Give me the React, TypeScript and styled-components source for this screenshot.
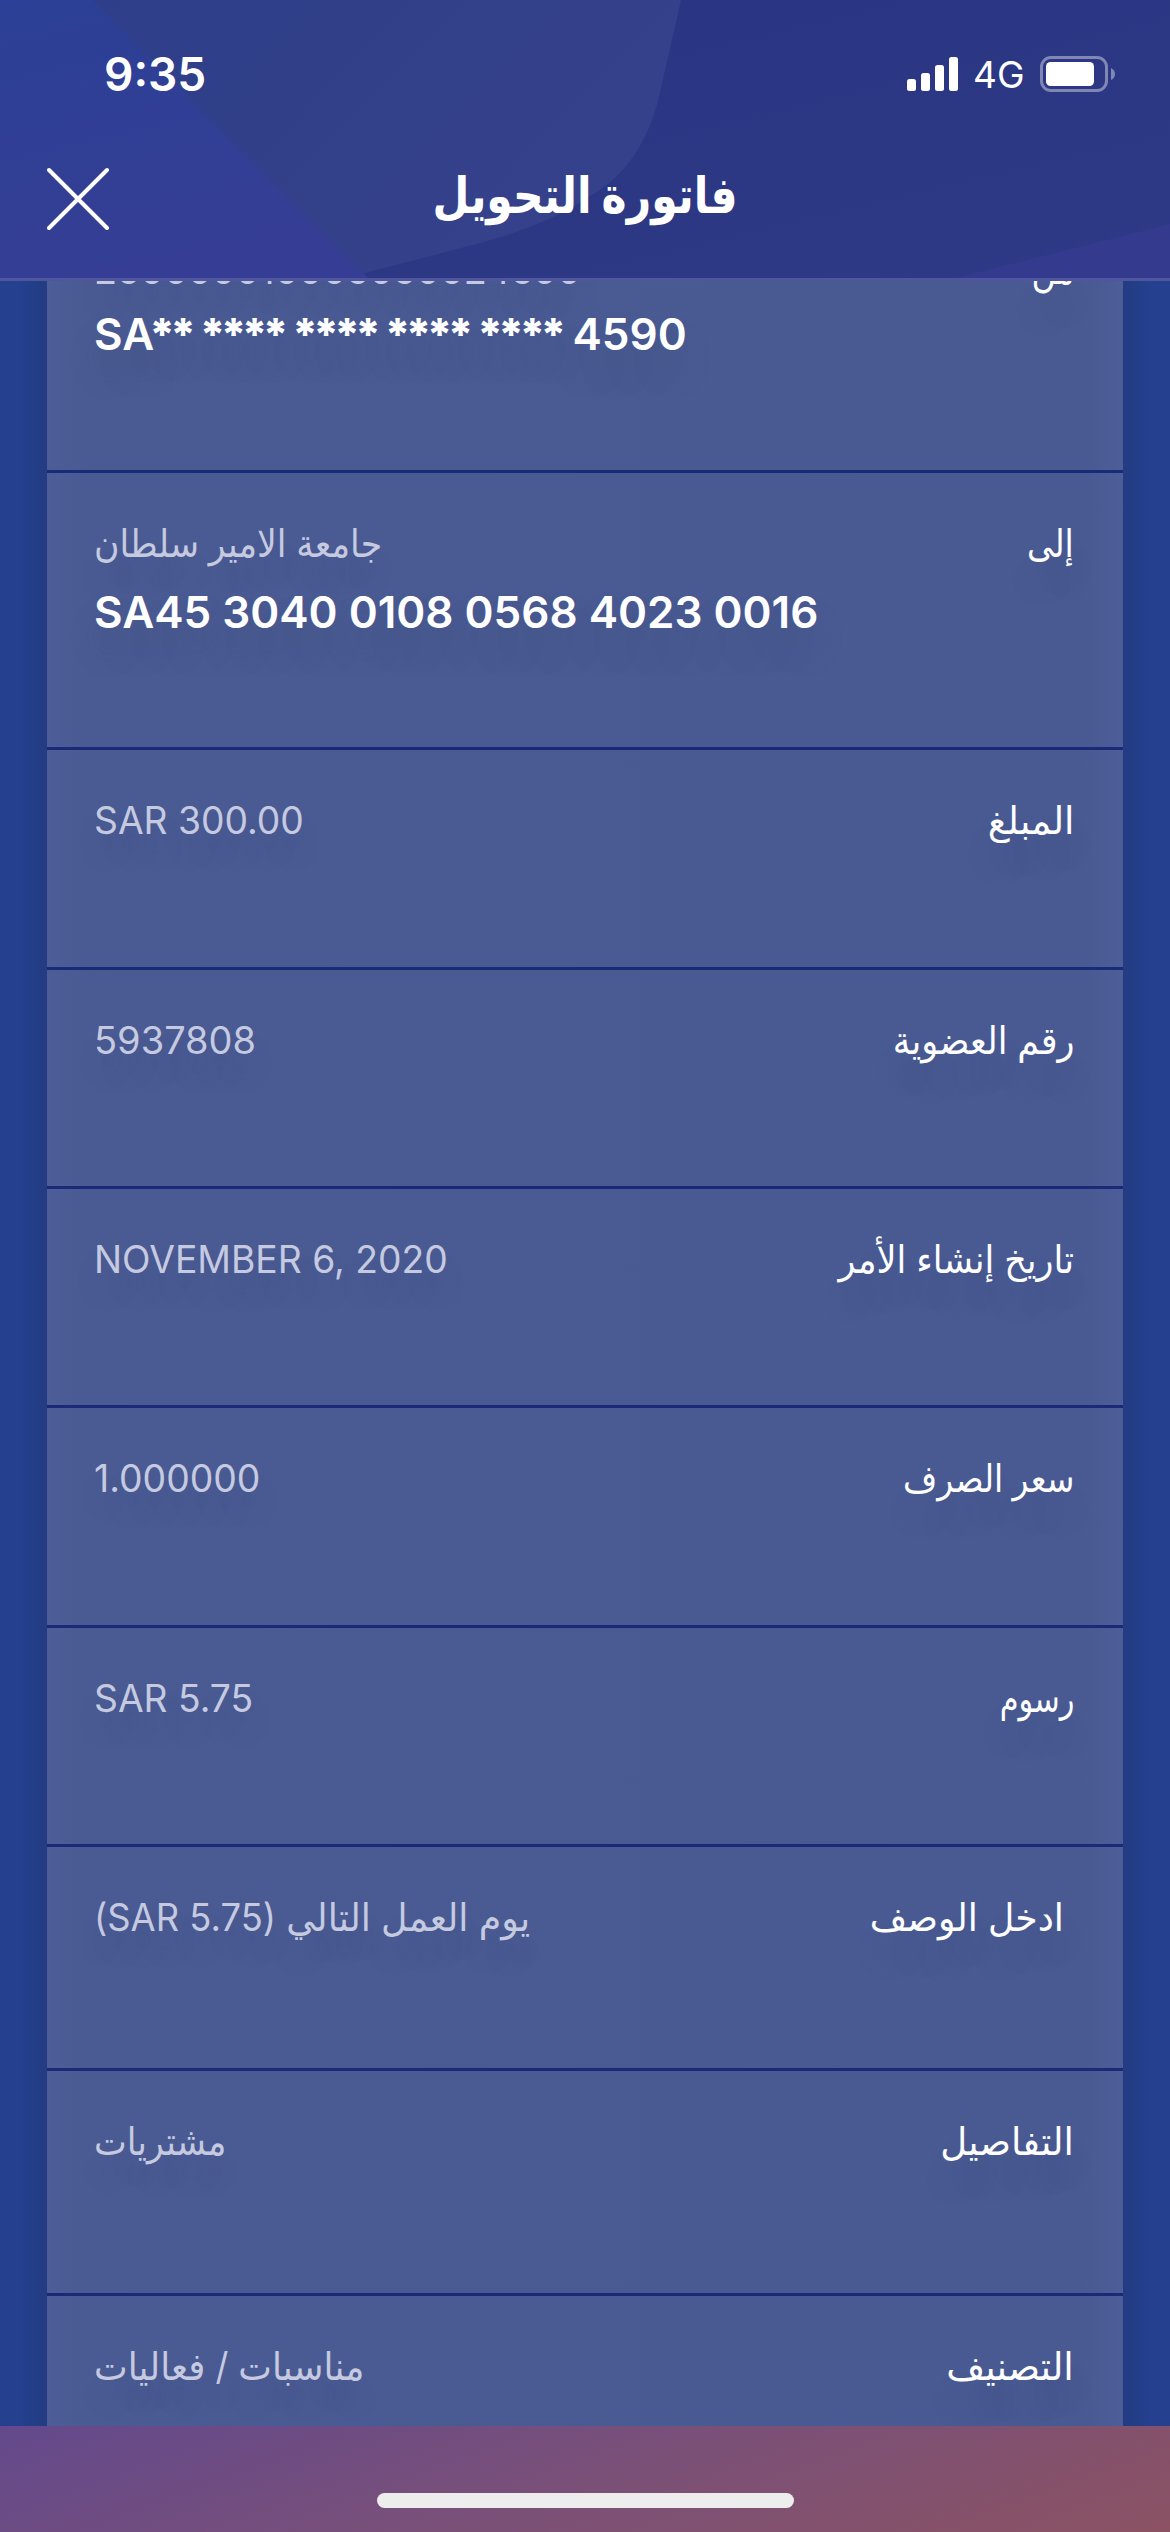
import React from "react";
import styled, { createGlobalStyle } from "styled-components";

const Global = createGlobalStyle`
  * { box-sizing: border-box; }
  html, body { margin: 0; padding: 0; background: #233f8f; }
`;

const Screen = styled.div`
  position: relative;
  width: 1170px;
  height: 2532px;
  overflow: hidden;
  display: flex;
  flex-direction: column;
  font-family: Inter, "DejaVu Sans", sans-serif;
  color: #fff;
`;

const Header = styled.header`
  position: relative;
  flex: none;
  height: 281px;
  border-bottom: 3px solid #5055a0;
  background: #2a3684;
  display: flex;
  flex-direction: column;
`;

const Backdrop = styled.svg`
  position: absolute;
  left: 0;
  top: 0;
`;

const StatusBar = styled.div`
  position: relative;
  height: 120px;
  display: flex;
  justify-content: space-between;
  align-items: flex-start;
  padding: 45px 54px 0 104px;
`;

const Time = styled.div`
  font-size: 46px;
  line-height: 58px;
  font-weight: 600;
`;

const Indicators = styled.div`
  display: flex;
  align-items: center;
  height: 58px;
`;

const Network = styled.span`
  width: 50px;
  margin: 0 17px 0 15px;
  font-size: 37px;
  line-height: 46px;
  padding-top: 2px;
  white-space: nowrap;
`;

const TitleBar = styled.div`
  position: relative;
  height: 158px;
  display: grid;
  grid-template-columns: 110px 1fr 110px;
`;

const Close = styled.button`
  padding: 0;
  margin: 47px 0 0 47px;
  width: 64px;
  height: 64px;
  border: 0;
  background: none;
`;

const Title = styled.h1`
  margin: 40px 0 0;
  text-align: center;
  font-size: 50px;
  line-height: 70px;
  font-weight: 700;
  transform: scaleX(0.85);
`;

const Scroll = styled.main`
  flex: 1;
  min-height: 0;
  overflow: hidden;
  padding: 0 47px;
  background: linear-gradient(90deg, #24408f 0, #24408f 18px, #233c82 47px, #233c82 1123px, #24408f 1152px);
`;

const Card = styled.section`
  display: flex;
  flex-direction: column;
  height: 100%;
  background: linear-gradient(90deg, #4c5d97 0, #4a5a93 40px, #495a93 1036px, #4c5d97 1076px);
`;

const Row = styled.div<{ $h: number; $up?: number }>`
  flex: none;
  height: ${(p) => p.$h}px;
  margin-top: ${(p) => -(p.$up ?? 0)}px;
  border-bottom: 3px solid #192b76;
  padding: 48px 49px 0 47px;
  display: flex;
  justify-content: space-between;
  align-items: flex-start;
`;

const Values = styled.div`
  display: flex;
  flex-direction: column;
  align-items: flex-start;
`;

const Value = styled.div<{ $sx?: number; $dy?: number }>`
  font-size: 38px;
  line-height: 44px;
  height: 44px;
  padding-top: ${(p) => p.$dy ?? 0}px;
  color: #c5cae0;
  white-space: nowrap;
  transform: scaleX(${(p) => p.$sx ?? 1});
  transform-origin: left;
  text-shadow: 0 22px 28px rgba(60, 85, 115, 0.12);
`;

const Iban = styled.div`
  margin-top: 20px;
  font-size: 44px;
  line-height: 54px;
  font-weight: 600;
  white-space: nowrap;
  text-shadow: 0 24px 28px rgba(60, 85, 115, 0.3);
`;

const Mask = styled.span`
  margin-left: -5px;
  font-weight: 800;
  letter-spacing: -4.6px;
  word-spacing: 3.4px;
`;

const Label = styled.div<{ $sx?: number; $inset?: number; $dy?: number }>`
  font-size: 38px;
  line-height: 44px;
  padding-top: ${(p) => p.$dy ?? 0}px;
  white-space: nowrap;
  margin-right: ${(p) => p.$inset ?? 0}px;
  transform: scaleX(${(p) => p.$sx ?? 1});
  transform-origin: right;
  text-shadow: 0 24px 28px rgba(60, 85, 115, 0.2);
`;

const Footer = styled.footer`
  flex: none;
  height: 106px;
  display: flex;
  justify-content: center;
  padding-top: 67px;
  background: linear-gradient(160deg, #63498c 0%, #7a5078 50%, #8b5263 100%);
`;

const HomeIndicator = styled.div`
  width: 417px;
  height: 15px;
  border-radius: 8px;
  background: #ededee;
`;

type Item = {
  label: string;
  value: string;
  iban?: React.ReactNode;
  h: number;
  up?: number;
  dy?: number;
  vx?: number;
  lx?: number;
  inset?: number;
};

const items: Item[] = [
  {
    label: "من",
    value: "250000010005050024590",
    iban: (
      <>
        SA<Mask>** **** **** **** ****</Mask> 4590
      </>
    ),
    h: 278,
    up: 86,
    dy: 5,
    vx: 0.995,
    lx: 0.87,
  },
  { label: "إلى", value: "جامعة الامير سلطان", iban: "SA45 3040 0108 0568 4023 0016", h: 277, vx: 0.913, lx: 0.87 },
  { label: "المبلغ", value: "SAR 300.00", h: 220, vx: 0.98, lx: 0.98 },
  { label: "رقم العضوية", value: "5937808", h: 219, lx: 0.925 },
  { label: "تاريخ إنشاء الأمر", value: "NOVEMBER 6, 2020", h: 219, vx: 0.98, lx: 0.924 },
  { label: "سعر الصرف", value: "1.000000", h: 220, vx: 0.983, lx: 0.868 },
  { label: "رسوم", value: "SAR 5.75", h: 219, vx: 0.98, lx: 0.8 },
  { label: "ادخل الوصف", value: "يوم العمل التالي (SAR 5.75)", h: 224, inset: 10, vx: 0.957, lx: 0.952 },
  { label: "التفاصيل", value: "مشتريات", h: 225, vx: 0.915, lx: 0.976 },
  { label: "التصنيف", value: "مناسبات / فعاليات", h: 225, vx: 0.94, lx: 0.99 },
];

export default function App() {
  return (
    <>
      <Global />
      <Screen>
        <Header>
          <Backdrop width="1170" height="278" viewBox="0 0 1170 278">
            <defs>
              <linearGradient id="left" x1="0" y1="0" x2="0.3" y2="1">
                <stop offset="0" stopColor="#2b4096" />
                <stop offset="1" stopColor="#353e94" />
              </linearGradient>
              <linearGradient id="mid" x1="0" y1="0" x2="1" y2="0.4">
                <stop offset="0" stopColor="#2d3e88" />
                <stop offset="1" stopColor="#36418b" />
              </linearGradient>
              <linearGradient id="right" x1="0" y1="0" x2="1" y2="1">
                <stop offset="0" stopColor="#283482" />
                <stop offset="1" stopColor="#2f3a86" />
              </linearGradient>
            </defs>
            <rect width="1170" height="278" fill="url(#right)" />
            <path d="M92 0H681L661 88Q645 165 590 196Q550 224 480 243L345 278H0Z" fill="url(#mid)" />
            <path d="M0 0H92L368 278H0Z" fill="url(#left)" />
            <path d="M955 278L1170 224V278Z" fill="#343a8e" />
          </Backdrop>
          <StatusBar>
            <Time>9:35</Time>
            <Indicators>
              <svg width="51" height="34" viewBox="0 0 51 34" fill="#fff">
                <rect x="0" y="22" width="9" height="12" rx="2.5" />
                <rect x="14" y="16" width="9" height="18" rx="2.5" />
                <rect x="28" y="8" width="9" height="26" rx="2.5" />
                <rect x="42" y="0" width="9" height="34" rx="2.5" />
              </svg>
              <Network>4G</Network>
              <svg width="76" height="36" viewBox="0 0 76 36">
                <rect x="1.5" y="1.5" width="65" height="33" rx="9.5" fill="none" stroke="#8087b5" strokeWidth="3" />
                <rect x="6" y="6" width="48" height="24" rx="4.5" fill="#fff" />
                <path d="M71 12Q75 14 75 18Q75 22 71 24Z" fill="#8087b5" />
              </svg>
            </Indicators>
          </StatusBar>
          <TitleBar>
            <Close aria-label="إغلاق">
              <svg width="64" height="64" viewBox="0 0 64 64" stroke="#fff" strokeWidth="4" strokeLinecap="round">
                <path d="M2 3L60 61M60 3L2 61" />
              </svg>
            </Close>
            <Title dir="rtl">فاتورة التحويل</Title>
          </TitleBar>
        </Header>
        <Scroll>
          <Card>
            {items.map((it) => (
              <Row key={it.label} $h={it.h} $up={it.up}>
                <Values>
                  <Value dir="auto" $sx={it.vx} $dy={it.dy}>
                    {it.value}
                  </Value>
                  {it.iban && <Iban>{it.iban}</Iban>}
                </Values>
                <Label dir="rtl" $sx={it.lx} $inset={it.inset} $dy={it.dy}>
                  {it.label}
                </Label>
              </Row>
            ))}
          </Card>
        </Scroll>
        <Footer>
          <HomeIndicator />
        </Footer>
      </Screen>
    </>
  );
}
